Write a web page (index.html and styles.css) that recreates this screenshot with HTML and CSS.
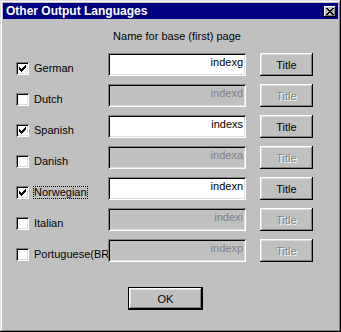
FILE: index.html
```html
<!DOCTYPE html>
<html lang="en">
<head>
  <meta charset="UTF-8">
  <title>Other Output Languages</title>
  <link rel="stylesheet" href="styles.css">
</head>
<body>
  <div class="window">
    <div class="titlebar">
      <span class="title">Other Output Languages</span>
      <button class="close" aria-label="Close">
        <svg width="8" height="7" viewBox="0 0 8 7" shape-rendering="crispEdges">
          <path d="M0 0h2v1h-2zM6 0h2v1h-2zM1 1h2v1h-2zM5 1h2v1h-2zM2 2h4v1h-4zM3 3h2v1h-2zM2 4h4v1h-4zM1 5h2v1h-2zM5 5h2v1h-2zM0 6h2v1h-2zM6 6h2v1h-2z" fill="#000"/>
        </svg>
      </button>
    </div>

    <div class="content">
      <div class="caption">Name for base (first) page</div>

      <div class="row">
        <label class="lang">
          <span class="check"><svg class="tick" width="13" height="13" viewBox="0 0 13 13" shape-rendering="crispEdges"><path d="M9 3h1v3h-1zM8 4h1v3h-1zM7 5h1v3h-1zM6 6h1v3h-1zM5 7h1v3h-1zM4 6h1v3h-1zM3 5h1v3h-1z"/></svg></span>
          <span class="name">German</span>
        </label>
        <div class="field">indexg</div>
        <button class="btn">Title</button>
      </div>
      <div class="row">
        <label class="lang"><span class="check"></span><span class="name">Dutch</span></label>
        <div class="field off">indexd</div>
        <button class="btn off">Title</button>
      </div>
      <div class="row">
        <label class="lang">
          <span class="check"><svg class="tick" width="13" height="13" viewBox="0 0 13 13" shape-rendering="crispEdges"><path d="M9 3h1v3h-1zM8 4h1v3h-1zM7 5h1v3h-1zM6 6h1v3h-1zM5 7h1v3h-1zM4 6h1v3h-1zM3 5h1v3h-1z"/></svg></span>
          <span class="name">Spanish</span>
        </label>
        <div class="field">indexs</div>
        <button class="btn">Title</button>
      </div>
      <div class="row">
        <label class="lang"><span class="check"></span><span class="name">Danish</span></label>
        <div class="field off">indexa</div>
        <button class="btn off">Title</button>
      </div>
      <div class="row">
        <label class="lang">
          <span class="check"><svg class="tick" width="13" height="13" viewBox="0 0 13 13" shape-rendering="crispEdges"><path d="M9 3h1v3h-1zM8 4h1v3h-1zM7 5h1v3h-1zM6 6h1v3h-1zM5 7h1v3h-1zM4 6h1v3h-1zM3 5h1v3h-1z"/></svg></span>
          <span class="name focus">Norwegian</span>
        </label>
        <div class="field">indexn</div>
        <button class="btn">Title</button>
      </div>
      <div class="row">
        <label class="lang"><span class="check"></span><span class="name">Italian</span></label>
        <div class="field off">indexi</div>
        <button class="btn off">Title</button>
      </div>
      <div class="row">
        <label class="lang"><span class="check"></span><span class="name">Portuguese(BR</span></label>
        <div class="field off">indexp</div>
        <button class="btn off">Title</button>
      </div>

      <button class="btn ok">OK</button>
    </div>
  </div>
</body>
</html>
```

FILE: styles.css
```css
body {
  margin: 0;
  background: #c0c0c0;
  font-family: "Liberation Sans", Arial, sans-serif;
  font-size: 11px;
  color: #000;
}

.window {
  width: 341px;
  height: 332px;
  box-sizing: border-box;
  padding: 3px;
  background: #c0c0c0;
  box-shadow: inset -1px -1px #000, inset 1px 1px #dfdfdf,
              inset -2px -2px #808080, inset 2px 2px #fff;
}

.titlebar {
  height: 16px;
  background: #000080;
  display: flex;
  align-items: center;
  justify-content: space-between;
  padding: 0 2px;
}

.title {
  color: #fff;
  font-weight: bold;
  font-size: 12px;
  padding-left: 1px;
}

.close {
  width: 12px;
  height: 11px;
  padding: 0;
  border: none;
  background: #c0c0c0;
  display: flex;
  align-items: center;
  justify-content: center;
  box-shadow: inset -1px -1px #000, inset 1px 1px #fff,
              inset -2px -2px #808080;
}

.content {
  padding-top: 11px;
}

.caption {
  width: 138px;
  margin: 0 0 10px 105px;
  line-height: 13px;
  white-space: nowrap;
  display: flex;
  justify-content: center;
}

.row {
  display: flex;
  height: 23px;
  margin-bottom: 8px;
}

.lang {
  width: 105px;
  box-sizing: border-box;
  padding: 9px 0 0 13px;
  display: flex;
  align-items: flex-start;
  white-space: nowrap;
}

.check {
  flex: none;
  width: 13px;
  height: 13px;
  box-sizing: border-box;
  background: #fff;
  box-shadow: inset 1px 1px #808080, inset -1px -1px #fff,
              inset 2px 2px #000, inset -2px -2px #dfdfdf;
}

.tick {
  display: block;
  fill: #000;
}

.name {
  margin-left: 4px;
  line-height: 13px;
  padding: 0 1px;
}

.name.focus {
  outline: 1px dotted #000;
  outline-offset: -1px;
}

.field {
  width: 138px;
  height: 23px;
  box-sizing: border-box;
  padding: 3px 3px 0;
  line-height: 13px;
  text-align: right;
  background: #fff;
  box-shadow: inset 1px 1px #808080, inset -1px -1px #fff,
              inset 2px 2px #000, inset -2px -2px #dfdfdf;
}

.field.off {
  background: #c0c0c0;
  color: #808080;
}

.btn {
  font-family: inherit;
  font-size: 11px;
  width: 53px;
  height: 23px;
  margin-left: 14px;
  padding: 0;
  border: none;
  background: #c0c0c0;
  color: #000;
  box-shadow: inset -1px -1px #000, inset 1px 1px #fff,
              inset -2px -2px #808080, inset 2px 2px #dfdfdf;
}

.btn.off {
  color: #808080;
  text-shadow: 1px 1px #fff;
}

.ok {
  display: block;
  width: 75px;
  margin: 25px 0 0 125px;
  border: 1px solid #000;
}
```
